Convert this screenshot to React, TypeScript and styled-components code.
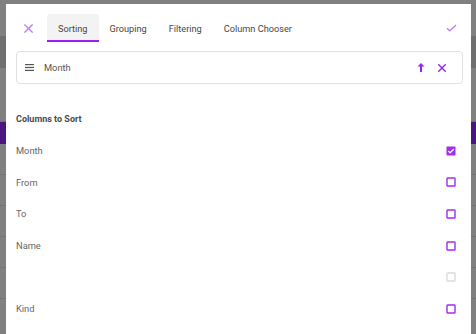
import React from "react";
import styled, { createGlobalStyle } from "styled-components";

const Global = createGlobalStyle`
  html, body { margin: 0; padding: 0; }
  body {
    width: 476px; height: 334px; overflow: hidden;
    font-family: Roboto, "Noto Sans", Arial, sans-serif;
    background: #7f7f7f;
  }
`;

const Page = styled.div`
  position: relative;
  width: 476px;
  height: 334px;
  overflow: hidden;
  background: #808080;
`;

const BgTable = styled.div`
  display: flex;
  flex-direction: column;
  width: 100%;
`;

const BgRow = styled.div<{ $h: number; $bg: string; $line?: boolean }>`
  height: ${(p) => p.$h}px;
  background: ${(p) => p.$bg};
  border-bottom: ${(p) => (p.$line ? "1px solid #737373" : "none")};
  box-sizing: border-box;
`;

const Modal = styled.div`
  position: absolute;
  left: 6px;
  top: 4px;
  width: 465px;
  height: 340px;
  background: #ffffff;
  display: flex;
  flex-direction: column;
  padding: 0 8px 0 10px;
  box-sizing: border-box;
`;

const Header = styled.div`
  display: flex;
  align-items: center;
  height: 28px;
  margin-top: 10px;
`;

const IconButton = styled.button<{ $color: string; $w?: number }>`
  border: 0;
  background: transparent;
  padding: 0;
  width: ${(p) => p.$w ?? 24}px;
  height: 24px;
  display: flex;
  align-items: center;
  justify-content: center;
  color: ${(p) => p.$color};
  cursor: pointer;
`;

const Tabs = styled.div`
  display: flex;
  height: 28px;
  margin-left: 7px;
  flex: 1;
`;

const Tab = styled.div<{ $active?: boolean }>`
  height: 28px;
  box-sizing: border-box;
  padding: 2px 11px 0;
  display: flex;
  align-items: center;
  font-size: 9.2px;
  color: #474747;
  background: ${(p) => (p.$active ? "#f3f3f3" : "transparent")};
  border-bottom: 2px solid ${(p) => (p.$active ? "#a020f0" : "transparent")};
  border-radius: 3px 3px 0 0;
`;

const Chip = styled.div`
  margin-top: 9px;
  height: 33px;
  border: 1px solid #e0e0e0;
  border-radius: 4px;
  box-sizing: border-box;
  display: flex;
  align-items: center;
  padding: 0 15px 0 8px;
  width: 447px;
`;

const ChipLabel = styled.span`
  font-size: 9.3px;
  color: #555;
  margin-left: 10px;
  flex: 1;
`;

const ChipActions = styled.div`
  display: flex;
  align-items: center;
  gap: 11px;
`;

const SectionTitle = styled.div`
  margin-top: 28px;
  font-size: 9px;
  font-weight: 700;
  color: #4a4a4a;
  height: 14px;
  display: flex;
  align-items: center;
`;

const List = styled.div`
  display: flex;
  flex-direction: column;
  margin-top: 9px;
  width: 447px;
`;

const Row = styled.div`
  height: 31.6px;
  display: flex;
  align-items: center;
  justify-content: space-between;
`;

const RowLabel = styled.span`
  font-size: 9.3px;
  color: #656565;
`;

const BoxWrap = styled.span`
  display: flex;
  width: 10px;
  height: 10px;
  margin-right: 7px;
`;

const Checkbox = ({ checked, disabled }: { checked?: boolean; disabled?: boolean }) => (
  <BoxWrap>
    <svg width="10" height="10" viewBox="0 0 10 10">
      {checked ? (
        <>
          <rect x="0.5" y="0.5" width="9" height="9" rx="0.8" fill="#a12df0" />
          <path d="M2.3 5.1L4.1 6.8L7.7 3.2" stroke="#fff" strokeWidth="1.3" fill="none" />
        </>
      ) : (
        <rect
          x="1"
          y="1"
          width="8"
          height="8"
          rx="0.5"
          fill="#fff"
          stroke={disabled ? "#dcdcdc" : "#a12df0"}
          strokeWidth="1.4"
        />
      )}
    </svg>
  </BoxWrap>
);

const XIcon = ({ size = 9, w = 1.6 }: { size?: number; w?: number }) => (
  <svg width={size} height={size} viewBox="0 0 10 10">
    <path d="M1 1L9 9M9 1L1 9" stroke="currentColor" strokeWidth={w} strokeLinecap="square" />
  </svg>
);

const CheckIcon = () => (
  <svg width="11" height="8" viewBox="0 0 11 8">
    <path d="M1 4.2L3.8 6.8L10 1" stroke="currentColor" strokeWidth="1.3" fill="none" />
  </svg>
);

const MenuIcon = () => (
  <svg width="9" height="7" viewBox="0 0 9 7">
    <rect x="0" y="0" width="9" height="1.2" fill="#555" />
    <rect x="0" y="2.9" width="9" height="1.2" fill="#555" />
    <rect x="0" y="5.8" width="9" height="1.2" fill="#555" />
  </svg>
);

const UpIcon = () => (
  <svg width="8" height="9" viewBox="0 0 8 9">
    <path d="M4 0L0.5 3.6H3V9H5V3.6H7.5Z" fill="currentColor" />
  </svg>
);

const columns: { name: string; checked?: boolean; disabled?: boolean }[] = [
  { name: "Month", checked: true },
  { name: "From" },
  { name: "To" },
  { name: "Name" },
  { name: "", disabled: true },
  { name: "Kind" },
];

export default function App() {
  return (
    <Page>
      <Global />
      <BgTable>
        <BgRow $h={36} $bg="#808080" />
        <BgRow $h={32} $bg="#6f6f6f" />
        <BgRow $h={54} $bg="#808080" $line />
        <BgRow $h={22} $bg="#4b1580" />
        <BgRow $h={31} $bg="#808080" $line />
        <BgRow $h={31} $bg="#808080" $line />
        <BgRow $h={31} $bg="#808080" $line />
        <BgRow $h={31} $bg="#808080" $line />
        <BgRow $h={31} $bg="#808080" $line />
      </BgTable>
      <Modal>
        <Header>
          <IconButton $color="#c27df0" aria-label="close">
            <XIcon size={9} w={1.5} />
          </IconButton>
          <Tabs>
            <Tab $active>Sorting</Tab>
            <Tab>Grouping</Tab>
            <Tab>Filtering</Tab>
            <Tab>Column Chooser</Tab>
          </Tabs>
          <IconButton $color="#c27df0" aria-label="apply">
            <CheckIcon />
          </IconButton>
        </Header>
        <Chip>
          <MenuIcon />
          <ChipLabel>Month</ChipLabel>
          <ChipActions>
            <IconButton $color="#9b25ea" $w={10}>
              <UpIcon />
            </IconButton>
            <IconButton $color="#9b25ea" $w={10}>
              <XIcon size={8} w={1.8} />
            </IconButton>
          </ChipActions>
        </Chip>
        <SectionTitle>Columns to Sort</SectionTitle>
        <List>
          {columns.map((c, i) => (
            <Row key={i}>
              <RowLabel>{c.name}</RowLabel>
              <Checkbox checked={c.checked} disabled={c.disabled} />
            </Row>
          ))}
        </List>
      </Modal>
    </Page>
  );
}
